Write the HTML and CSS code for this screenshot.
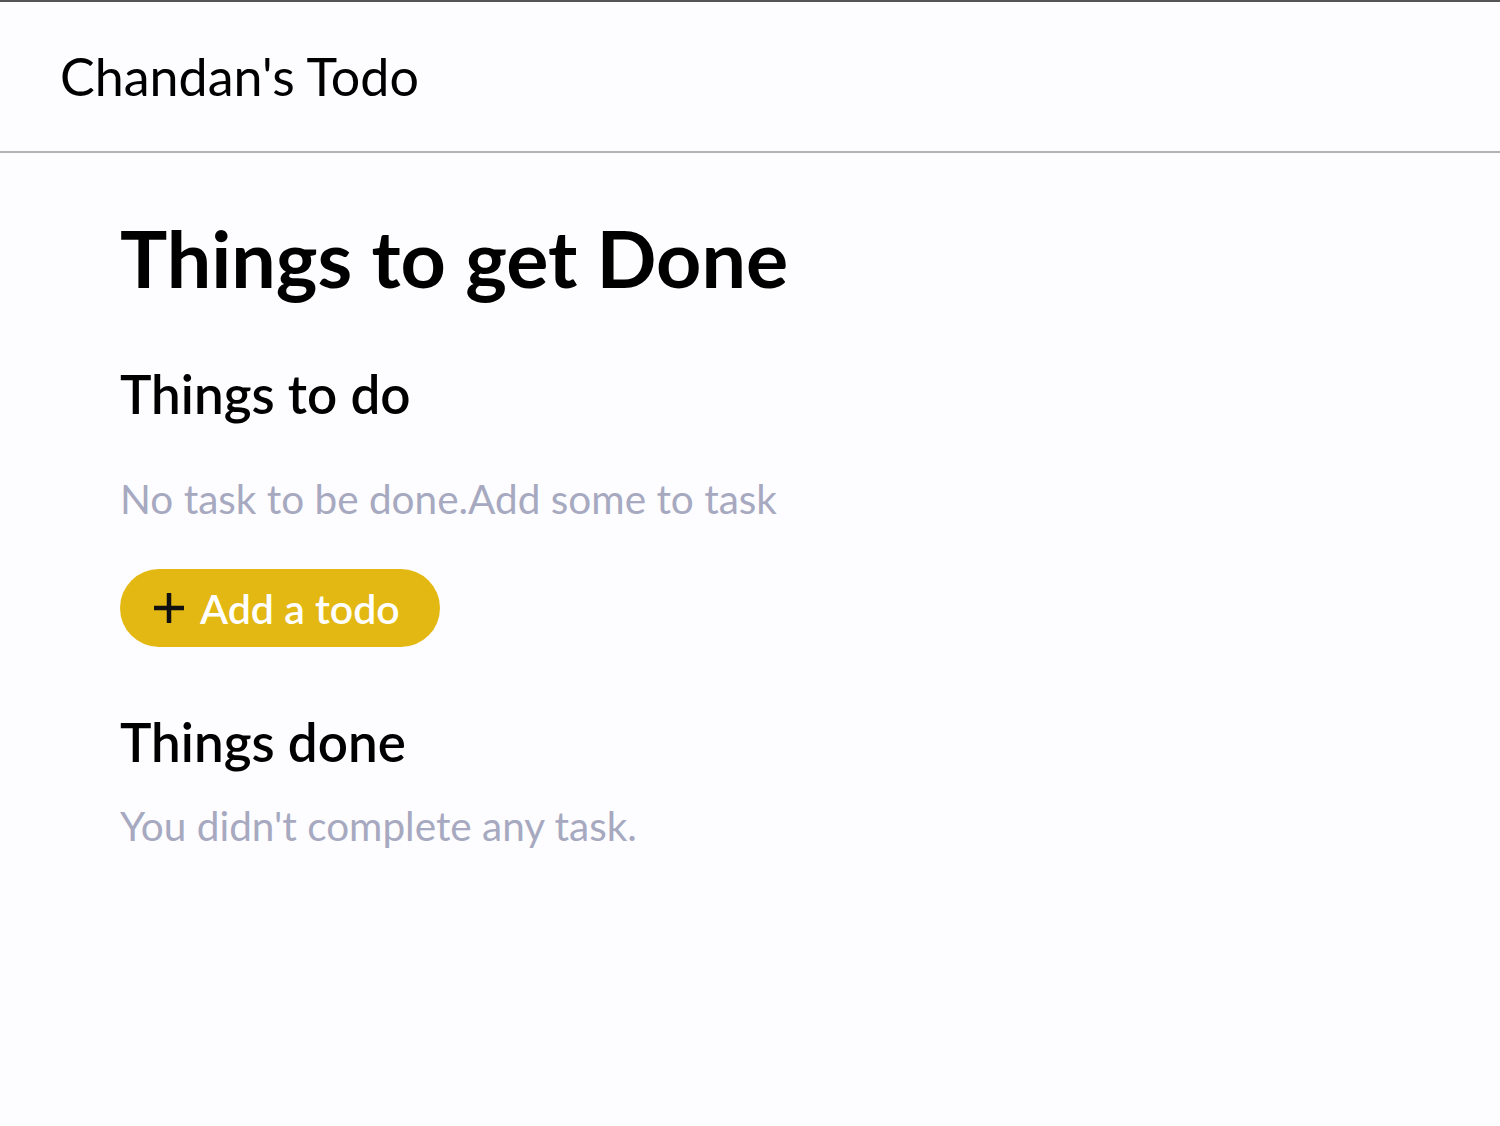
FILE: index.html
```html
<!DOCTYPE html>
<html lang="en">
<head>
<meta charset="utf-8">
<title>Chandan's Todo</title>
<link rel="stylesheet" href="styles.css">
</head>
<body>
<header class="topbar">
  <div class="brand">Chandan's Todo</div>
</header>
<main class="content">
  <h1 class="title">Things to get Done</h1>
  <h2 class="section-title">Things to do</h2>
  <p class="empty">No task to be done.Add some to task</p>
  <button class="add-btn" type="button"><span class="plus">
    <svg width="32" height="32" viewBox="0 0 32 32" aria-hidden="true"><path d="M16 1v30M1 16h30" stroke="#111" stroke-width="4.5" fill="none"/></svg>
  </span><span class="add-label">Add a todo</span></button>
  <h2 class="section-title done-title">Things done</h2>
  <p class="empty done-empty">You didn't complete any task.</p>
</main>
</body>
</html>
```
FILE: styles.css
```css
html, body {
  margin: 0;
  padding: 0;
}
body {
  background: #fdfcfe;
  font-family: "Lato", "Open Sans", sans-serif;
  color: #000;
  min-height: 1126px;
}
.topbar {
  border-top: 2px solid #555;
  border-bottom: 2px solid #b3b3b3;
  height: 149px;
  display: flex;
  align-items: center;
  padding-left: 60px;
  box-sizing: content-box;
}
.brand {
  font-size: 52px;
  line-height: 1.2;
  color: #000;
}
.content {
  display: flex;
  flex-direction: column;
  align-items: flex-start;
  padding-left: 120px;
}
.title {
  margin: 57px 0 0;
  font-size: 79px;
  line-height: 96px;
  font-weight: 700;
}
.section-title {
  margin: 55px 0 0;
  font-size: 53px;
  line-height: 65px;
  font-weight: 600;
}
.empty {
  margin: 46px 0 0;
  font-size: 40.5px;
  line-height: 54px;
  color: #a6a9bf;
}
.add-btn {
  margin-top: 43px;
  width: 320px;
  height: 78px;
  border: none;
  border-radius: 39px;
  background: #e3b812;
  display: flex;
  align-items: center;
  gap: 15px;
  padding: 0 0 0 33px;
  font-family: inherit;
  cursor: pointer;
}
.plus {
  display: flex;
}
.add-label {
  font-size: 41px;
  font-weight: 600;
  color: #fff;
  line-height: 1;
}
.done-title {
  margin-top: 62px;
}
.done-empty {
  margin-top: 25px;
}
```
